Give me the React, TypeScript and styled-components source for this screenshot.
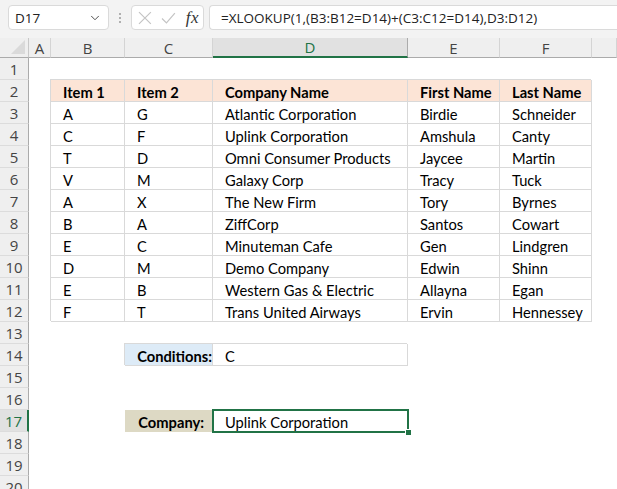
import styled, { createGlobalStyle, css } from "styled-components";
import { ChevronDown } from "lucide-react";

const GlobalStyle = createGlobalStyle`
  html, body {
    margin: 0;
    padding: 0;
    background: #ffffff;
    overflow: hidden;
  }
`;

const GREEN = "#217346";
const GRID = "#d9d9d9";

const Page = styled.div`
  width: 617px;
  height: 489px;
  overflow: hidden;
  font-family: "Lato", "Liberation Sans", sans-serif;
`;

// ---------- formula bar ----------
const FormulaBar = styled.div`
  height: 38px;
  background: #f3f3f3;
  display: flex;
  align-items: flex-start;
  padding: 5px 0 0 8px;
  box-sizing: border-box;
  font-family: "Open Sans", "Noto Sans", sans-serif;
`;

const NameBox = styled.div`
  width: 101px;
  height: 25px;
  box-sizing: border-box;
  background: #fff;
  border: 1px solid #dadada;
  border-radius: 4px;
  display: flex;
  align-items: center;
  justify-content: space-between;
  padding: 0 6px;
  font-size: 13.5px;
  color: #222;
`;

const Dots = styled.div`
  width: 22px;
  height: 25px;
  display: flex;
  flex-direction: column;
  align-items: center;
  justify-content: center;
  gap: 2px;

  span {
    width: 2px;
    height: 2px;
    background: #9a9a9a;
    border-radius: 1px;
  }
`;

const ActionBox = styled.div`
  width: 73px;
  height: 25px;
  box-sizing: border-box;
  background: #fff;
  border: 1px solid #dadada;
  border-radius: 4px;
  display: flex;
  align-items: center;
  padding: 0 4px 0 6px;
  gap: 9px;
`;

const Fx = styled.span`
  font-family: "Liberation Serif", serif;
  font-style: italic;
  font-size: 17px;
  color: #333;
  margin-left: 1px;
  letter-spacing: 0.5px;
`;

const FormulaInput = styled.div`
  flex: 1;
  height: 25px;
  margin-left: 5px;
  box-sizing: border-box;
  background: #fff;
  border: 1px solid #dadada;
  border-right: none;
  border-radius: 4px 0 0 4px;
  display: flex;
  align-items: center;
  padding-left: 11px;
  font-size: 13.5px;
  color: #222;
  white-space: nowrap;
  overflow: hidden;
`;

// ---------- sheet ----------
const Sheet = styled.div`
  display: grid;
  grid-template-columns: 29px 22px 74px 88px 195px 92px 92px 1fr;
  grid-template-rows: 20px repeat(20, 22px);
`;

const headerBase = css`
  background: #efefef;
  color: #444;
  font-family: "Open Sans", "Noto Sans", sans-serif;
  display: flex;
  align-items: center;
  justify-content: center;
  box-sizing: border-box;
`;

const Corner = styled.div`
  ${headerBase};
  border-right: 1px solid #c8c8c8;
  border-bottom: 1px solid #ababab;
  justify-content: flex-end;
  align-items: flex-end;
  padding: 0 3px 3px 0;
`;

const Triangle = styled.div`
  width: 0;
  height: 0;
  border-left: 14px solid transparent;
  border-bottom: 14px solid #dadada;
`;

const ColHead = styled.div<{ $active?: boolean }>`
  ${headerBase};
  font-size: 15px;
  border-right: 1px solid #d4d4d4;
  border-bottom: 1px solid #ababab;
  ${(p) =>
    p.$active &&
    css`
      background: #e1e1e1;
      color: ${GREEN};
      border-bottom: 2px solid ${GREEN};
      border-right-color: #ababab;
    `}
`;

const RowHead = styled.div<{ $active?: boolean }>`
  ${headerBase};
  font-size: 15px;
  border-right: 1px solid #ababab;
  border-bottom: 1px solid #dcdcdc;
  ${(p) =>
    p.$active &&
    css`
      background: #e1e1e1;
      color: ${GREEN};
      border-right: 2px solid ${GREEN};
    `}
`;

type Fill = "none" | "peach" | "blue" | "tan";
const fills: Record<Fill, string> = {
  none: "transparent",
  peach: "#fce4d6",
  blue: "#ddebf7",
  tan: "#ddd9c4",
};

const Cell = styled.div<{
  $fill?: Fill;
  $bold?: boolean;
  $border?: boolean;
  $right?: number;
  $selected?: boolean;
}>`
  position: relative;
  box-sizing: border-box;
  display: flex;
  align-items: center;
  justify-content: ${(p) => (p.$right !== undefined ? "flex-end" : "flex-start")};
  padding: 1px ${(p) => p.$right ?? 0}px 0 12px;
  font-size: 14.7px;
  color: #000;
  white-space: nowrap;
  background: ${(p) => fills[p.$fill ?? "none"]};
  font-weight: ${(p) => (p.$bold ? 700 : 400)};
  ${(p) =>
    p.$border &&
    css`
      box-shadow: -1px -1px 0 ${GRID}, inset -1px -1px 0 ${GRID};
    `}
  ${(p) =>
    p.$selected &&
    css`
      z-index: 1;
      box-shadow: 0 0 0 1px ${GREEN}, inset 0 0 0 1px ${GREEN};
      &::after {
        content: "";
        position: absolute;
        right: -3px;
        bottom: -3px;
        width: 5px;
        height: 5px;
        background: ${GREEN};
        border-top: 1px solid #fff;
        border-left: 1px solid #fff;
      }
    `}
`;

// G is only partly in view, so its letter sits off-screen
const columns = ["A", "B", "C", "D", "E", "F", ""];

const header = ["Item 1", "Item 2", "Company Name", "First Name", "Last Name"];

const rows: string[][] = [
  ["A", "G", "Atlantic Corporation", "Birdie", "Schneider"],
  ["C", "F", "Uplink Corporation", "Amshula", "Canty"],
  ["T", "D", "Omni Consumer Products", "Jaycee", "Martin"],
  ["V", "M", "Galaxy Corp", "Tracy", "Tuck"],
  ["A", "X", "The New Firm", "Tory", "Byrnes"],
  ["B", "A", "ZiffCorp", "Santos", "Cowart"],
  ["E", "C", "Minuteman Cafe", "Gen", "Lindgren"],
  ["D", "M", "Demo Company", "Edwin", "Shinn"],
  ["E", "B", "Western Gas & Electric", "Allayna", "Egan"],
  ["F", "T", "Trans United Airways", "Ervin", "Hennessey"],
];

function renderRow(n: number) {
  const cells: JSX.Element[] = [];
  const blank = (k: number) => <Cell key={`${n}-${k}`} />;

  if (n >= 2 && n <= 12) {
    const values = n === 2 ? header : rows[n - 3];
    cells.push(blank(0));
    values.forEach((v, i) =>
      cells.push(
        <Cell key={`${n}-v${i}`} $border $bold={n === 2} $fill={n === 2 ? "peach" : "none"}>
          {v}
        </Cell>
      )
    );
    cells.push(blank(9));
  } else if (n === 14) {
    cells.push(blank(0), blank(1));
    cells.push(
      <Cell key="c14" $fill="blue" $bold $right={1} $border>
        Conditions:
      </Cell>
    );
    cells.push(
      <Cell key="d14" $border>
        C
      </Cell>
    );
    cells.push(blank(4), blank(5), blank(6));
  } else if (n === 17) {
    cells.push(blank(0), blank(1));
    cells.push(
      <Cell key="c17" $fill="tan" $bold $right={9}>
        Company:
      </Cell>
    );
    cells.push(
      <Cell key="d17" $selected>
        Uplink Corporation
      </Cell>
    );
    cells.push(blank(4), blank(5), blank(6));
  } else {
    for (let k = 0; k < 7; k++) cells.push(blank(k));
  }
  return cells;
}

function XIcon() {
  return (
    <svg width="14" height="14" viewBox="0 0 14 14">
      <path d="M1 1 L13 13 M13 1 L1 13" stroke="#c4c4c4" strokeWidth="1.2" fill="none" />
    </svg>
  );
}

function CheckIcon() {
  return (
    <svg width="15" height="14" viewBox="0 0 15 14">
      <path d="M1 7.5 L5.5 12 L14 2" stroke="#c4c4c4" strokeWidth="1.2" fill="none" />
    </svg>
  );
}

export default function App() {
  const rowNums = Array.from({ length: 20 }, (_, i) => i + 1);
  return (
    <Page>
      <GlobalStyle />
      <FormulaBar>
        <NameBox>
          <span>D17</span>
          <ChevronDown size={14} color="#444" strokeWidth={1.6} />
        </NameBox>
        <Dots>
          <span />
          <span />
          <span />
        </Dots>
        <ActionBox>
          <XIcon />
          <CheckIcon />
          <Fx>fx</Fx>
        </ActionBox>
        <FormulaInput>=XLOOKUP(1,(B3:B12=D14)+(C3:C12=D14),D3:D12)</FormulaInput>
      </FormulaBar>
      <Sheet>
        <Corner>
          <Triangle />
        </Corner>
        {columns.map((c, i) => (
          <ColHead key={i} $active={c === "D"}>
            {c}
          </ColHead>
        ))}
        {rowNums.map((n) => [
          <RowHead key={`h${n}`} $active={n === 17}>
            {n}
          </RowHead>,
          ...renderRow(n),
        ])}
      </Sheet>
    </Page>
  );
}
